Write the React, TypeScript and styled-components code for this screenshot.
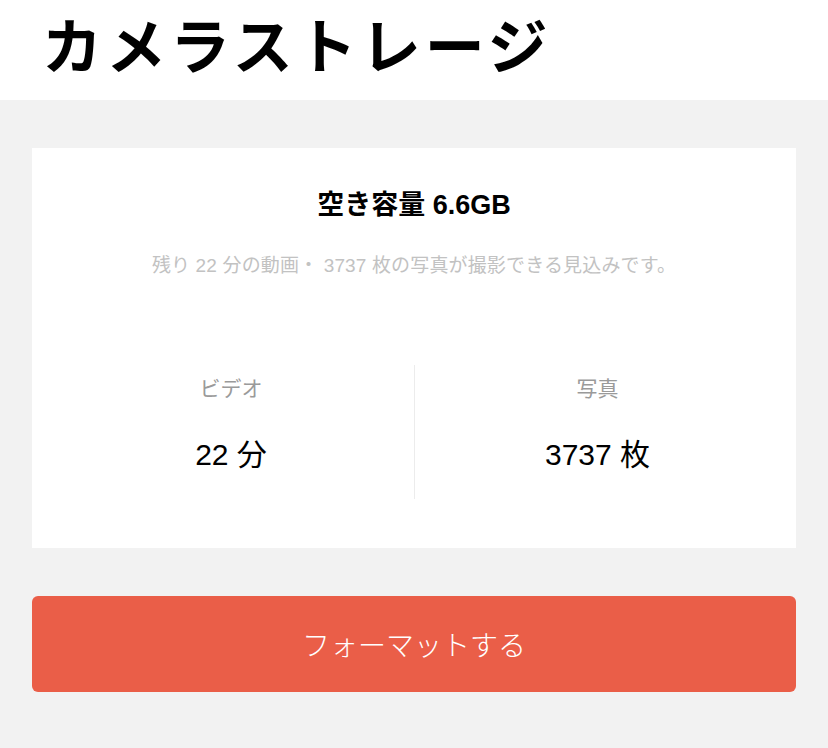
import React from 'react';
import styled, { createGlobalStyle } from 'styled-components';

const GlobalStyle = createGlobalStyle`
  html, body {
    margin: 0;
    padding: 0;
    background: #f2f2f2;
  }
  body {
    font-family: 'Liberation Sans', 'Noto Sans CJK JP', sans-serif;
    -webkit-font-smoothing: antialiased;
  }
`;

const stats = [
  { label: 'ビデオ', value: '22', unit: '分' },
  { label: '写真', value: '3737', unit: '枚' },
];

function App(): JSX.Element {
  return (
    <Page>
      <GlobalStyle />
      <Header>
        <Title>カメラストレージ</Title>
      </Header>
      <Body>
        <Card>
          <Capacity>空き容量 6.6GB</Capacity>
          <Note>残り 22 分の動画・ 3737 枚の写真が撮影できる見込みです。</Note>
          <StatRow>
            {stats.map((s) => (
              <Stat key={s.label}>
                <StatLabel>{s.label}</StatLabel>
                <StatValue>
                  {s.value} {s.unit}
                </StatValue>
              </Stat>
            ))}
          </StatRow>
        </Card>
        <FormatButton type="button">フォーマットする</FormatButton>
      </Body>
    </Page>
  );
}

const Page = styled.div`
  width: 828px;
  min-height: 748px;
  background: #f2f2f2;
`;

const Header = styled.header`
  height: 100px;
  background: #fff;
  padding: 4px 0 0 42px;
  box-sizing: border-box;
`;

const Title = styled.h1`
  margin: 0;
  font-family: 'Noto Sans CJK JP', sans-serif;
  font-size: 60px;
  font-weight: 700;
  line-height: 78px;
  letter-spacing: 4px;
  color: #000;
`;

const Body = styled.main`
  padding: 48px 32px;
  display: flex;
  flex-direction: column;
  gap: 48px;
`;

const Card = styled.section`
  background: #fff;
  padding: 39px 16px 49px;
  display: flex;
  flex-direction: column;
  align-items: center;
`;

const Capacity = styled.div`
  font-size: 27px;
  font-weight: 700;
  line-height: 36px;
  color: #000;
`;

const Note = styled.div`
  margin-top: 31px;
  font-size: 19px;
  line-height: 24px;
  letter-spacing: 0.15px;
  color: #c2c2c2;
`;

const StatRow = styled.div`
  margin-top: 87px;
  width: 100%;
  display: grid;
  grid-template-columns: 1fr 1fr;
  & > * + * {
    border-left: 1px solid #ececec;
  }
`;

const Stat = styled.div`
  display: flex;
  flex-direction: column;
  align-items: center;
  padding: 10px 0 24px;
  gap: 32px;
`;

const StatLabel = styled.div`
  font-size: 21px;
  line-height: 28px;
  color: #9a9a9a;
`;

const StatValue = styled.div`
  font-size: 30px;
  line-height: 40px;
  color: #000;
`;

const FormatButton = styled.button`
  height: 96px;
  border: none;
  border-radius: 6px;
  background: #ea5e48;
  color: #fff;
  font-family: 'Noto Sans CJK JP', sans-serif;
  font-size: 28px;
  font-weight: 300;
  cursor: pointer;
`;

export default App;
